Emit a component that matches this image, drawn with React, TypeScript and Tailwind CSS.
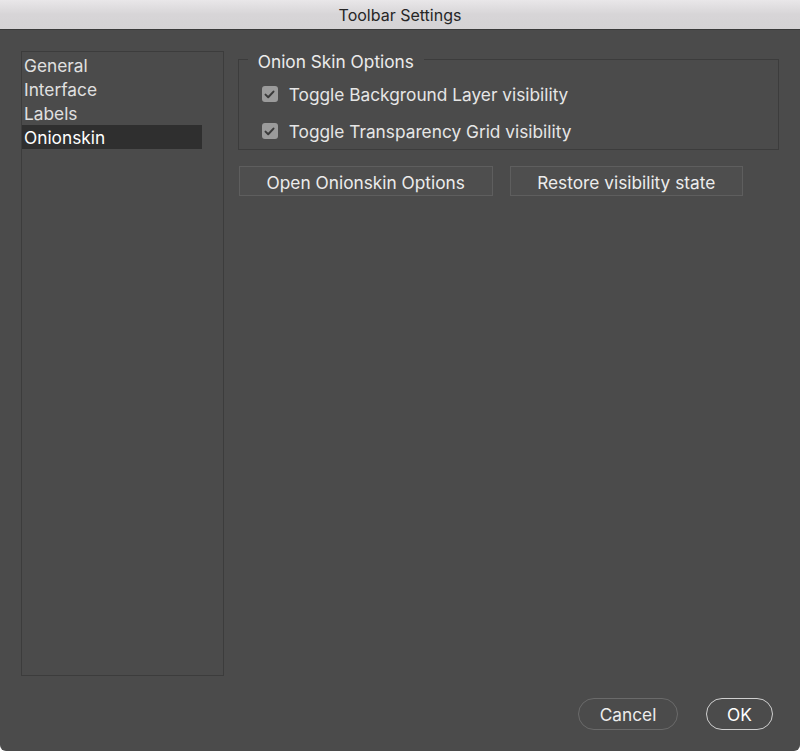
import React from 'react';

const sections = ['General', 'Interface', 'Labels', 'Onionskin'];

function CheckBox() {
  return (
    <span className="flex h-[16px] w-[16px] shrink-0 items-center justify-center rounded-[3px] bg-[#9b9b9b]">
      <svg width="11" height="9" viewBox="0 0 11 9" fill="none">
        <path d="M1.5 4.6 L4.2 7.2 L9.5 1.6" stroke="#3a3a3a" strokeWidth="2" strokeLinecap="round" strokeLinejoin="round" />
      </svg>
    </span>
  );
}

function CheckRow({ label }: { label: string }) {
  return (
    <label className="flex h-[20px] items-center gap-[11px]">
      <CheckBox />
      <span className="pt-[2px] text-[17.3px] leading-[20px] text-[#e6e6e6]">{label}</span>
    </label>
  );
}

export default function App() {
  const selected = 'Onionskin';

  return (
    <div className="h-[751px] w-[800px] bg-white" style={{ fontFamily: 'Inter, "Liberation Sans", sans-serif' }}>
      <div className="flex h-full flex-col overflow-hidden rounded-b-[6px] bg-[#4b4b4b]">
        {/* title bar */}
        <div className="flex h-[30px] shrink-0 items-center justify-center border-b border-[#3a3a3a] bg-gradient-to-b from-[#e9e7e9] via-[#d7d5d7] to-[#d5d3d5]">
          <span className="text-[16px] text-[#262626]">Toolbar Settings</span>
        </div>

        <div className="flex flex-1 flex-col px-[21px] pt-[21px]">
          <div className="flex">
            {/* section list */}
            <div className="h-[625px] w-[203px] border border-[#3c3c3c] pt-[1px]">
              {sections.map((s) => (
                <div
                  key={s}
                  className={
                    s === selected
                      ? 'h-[24px] w-[180px] bg-[#2f2f2f] pl-[2px] pt-[2px] text-[17.3px] leading-[22px] text-white'
                      : 'h-[24px] w-[180px] pl-[2px] pt-[2px] text-[17.3px] leading-[22px] text-[#e0e0e0]'
                  }
                >
                  {s}
                </div>
              ))}
            </div>

            {/* right side */}
            <div className="ml-[14px] flex w-[542px] flex-col pt-[8px]">
              <div className="relative h-[91px] border border-[#3c3c3c]">
                <span className="absolute left-[9px] top-[-8px] bg-[#4b4b4b] px-[10px] text-[17.3px] leading-[20px] text-[#ececec]">
                  Onion Skin Options
                </span>
                <div className="flex flex-col gap-[17px] pl-[23px] pt-[24px]">
                  <CheckRow label="Toggle Background Layer visibility" />
                  <CheckRow label="Toggle Transparency Grid visibility" />
                </div>
              </div>

              <div className="mt-[16px] flex gap-[17px] pl-[1px]">
                <button className="h-[30px] w-[254px] border border-[#5e5e5e] bg-[#4e4e4e] pt-[3px] text-[17.3px] text-[#ececec]">
                  Open Onionskin Options
                </button>
                <button className="h-[30px] w-[233px] border border-[#5e5e5e] bg-[#4e4e4e] pt-[3px] text-[17.3px] text-[#ececec]">
                  Restore visibility state
                </button>
              </div>
            </div>
          </div>

          {/* footer */}
          <div className="mt-[22px] flex justify-end gap-[28px] pr-[6px]">
            <button className="h-[32px] w-[100px] rounded-full border border-[#6a6a6a] pt-[1px] text-[17.3px] text-[#ededed]">
              Cancel
            </button>
            <button className="h-[32px] w-[67px] rounded-full border border-[#cfcfcf] pt-[1px] text-[17.3px] text-white">
              OK
            </button>
          </div>
        </div>
      </div>
    </div>
  );
}
